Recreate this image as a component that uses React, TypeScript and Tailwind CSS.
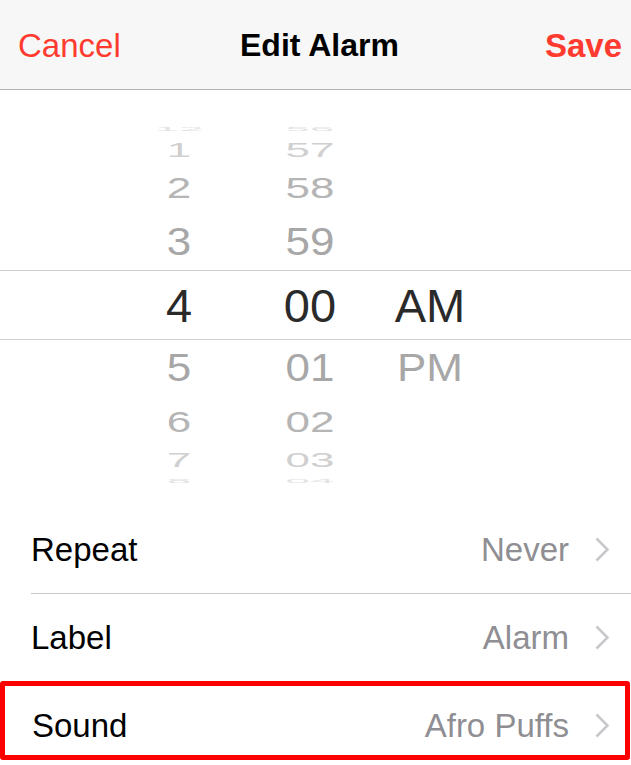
import React from "react";

const levels = [
  { h: "h-[12px]", t: "text-[44px] scale-y-[0.13] text-[#e3e3e3]" },
  { h: "h-[30px]", t: "text-[44px] scale-y-[0.45] text-[#d0d0d0]" },
  { h: "h-[46px]", t: "text-[44px] scale-y-[0.68] text-[#b5b5b5]" },
  { h: "h-[62px]", t: "text-[44px] scale-y-[0.88] text-[#a7a7a7]" },
  { h: "h-[64px]", t: "text-[47px] text-[#2a2a2a]" },
  { h: "h-[62px]", t: "text-[44px] scale-y-[0.88] text-[#a7a7a7]" },
  { h: "h-[46px]", t: "text-[44px] scale-y-[0.68] text-[#b5b5b5]" },
  { h: "h-[30px]", t: "text-[44px] scale-y-[0.45] text-[#d0d0d0]" },
  { h: "h-[12px]", t: "text-[44px] scale-y-[0.13] text-[#e3e3e3]" },
];

function Column({ items, className }: { items: string[]; className: string }) {
  return (
    <div className={"flex flex-col " + className}>
      {levels.map((lv, i) => (
        <div key={i} className={"flex items-center justify-center " + lv.h}>
          <span className={"leading-none " + lv.t}>{items[i]}</span>
        </div>
      ))}
    </div>
  );
}

function Chevron() {
  return (
    <svg width="14" height="25" viewBox="0 0 14 25" className="ml-[26px] shrink-0">
      <polyline
        points="1.5,1.5 12.5,12.5 1.5,23.5"
        fill="none"
        stroke="#c7c7cc"
        strokeWidth="2.6"
      />
    </svg>
  );
}

export default function App() {
  return (
    <div className="w-[631px] h-[765px] overflow-hidden bg-white font-['Liberation_Sans',Arial,sans-serif]">
      {/* Header */}
      <div className="h-[90px] bg-[#f7f7f7] border-b border-[#b2b2b2] flex items-center pl-[18px] pr-[9px] pt-[1px]">
        <span className="w-[222px] text-[33px] leading-none text-[#ff3b30]">Cancel</span>
        <span className="text-[32px] leading-none font-bold text-black">Edit Alarm</span>
        <span className="ml-auto text-[33px] leading-none font-bold text-[#ff3b30]">Save</span>
      </div>

      {/* Picker */}
      <div className="relative h-[416px]">
        <div className="absolute left-0 right-0 top-[180px] h-[70px] border-y border-[#cfcfcf]" />
        <div className="flex pt-[33px]">
          <Column
            className="ml-[129px] w-[100px]"
            items={["12", "1", "2", "3", "4", "5", "6", "7", "8"]}
          />
          <Column
            className="ml-[31px] w-[100px]"
            items={["56", "57", "58", "59", "00", "01", "02", "03", "04"]}
          />
          <Column
            className="ml-[10px] w-[120px]"
            items={["", "", "", "", "AM", "PM", "", "", ""]}
          />
        </div>
      </div>

      {/* List */}
      <div className="pl-[31px]">
        <div className="flex h-[88px] items-center border-b border-[#c8c7cc] pr-[22px]">
          <span className="text-[33px] leading-none text-black">Repeat</span>
          <span className="ml-auto text-[33px] leading-none text-[#8e8e93]">Never</span>
          <Chevron />
        </div>
      </div>
      <div className="pl-[31px]">
        <div className="flex h-[87px] items-center pr-[22px]">
          <span className="text-[33px] leading-none text-black">Label</span>
          <span className="ml-auto text-[33px] leading-none text-[#8e8e93]">Alarm</span>
          <Chevron />
        </div>
      </div>
      <div className="w-[630px] h-[79px] border-[5px] border-[#ff0000] rounded-[3px] flex items-center pt-[9px] pl-[27px] pr-[16px]">
        <span className="text-[33px] leading-none text-black">Sound</span>
        <span className="ml-auto text-[33px] leading-none text-[#8e8e93]">Afro Puffs</span>
        <Chevron />
      </div>
    </div>
  );
}
